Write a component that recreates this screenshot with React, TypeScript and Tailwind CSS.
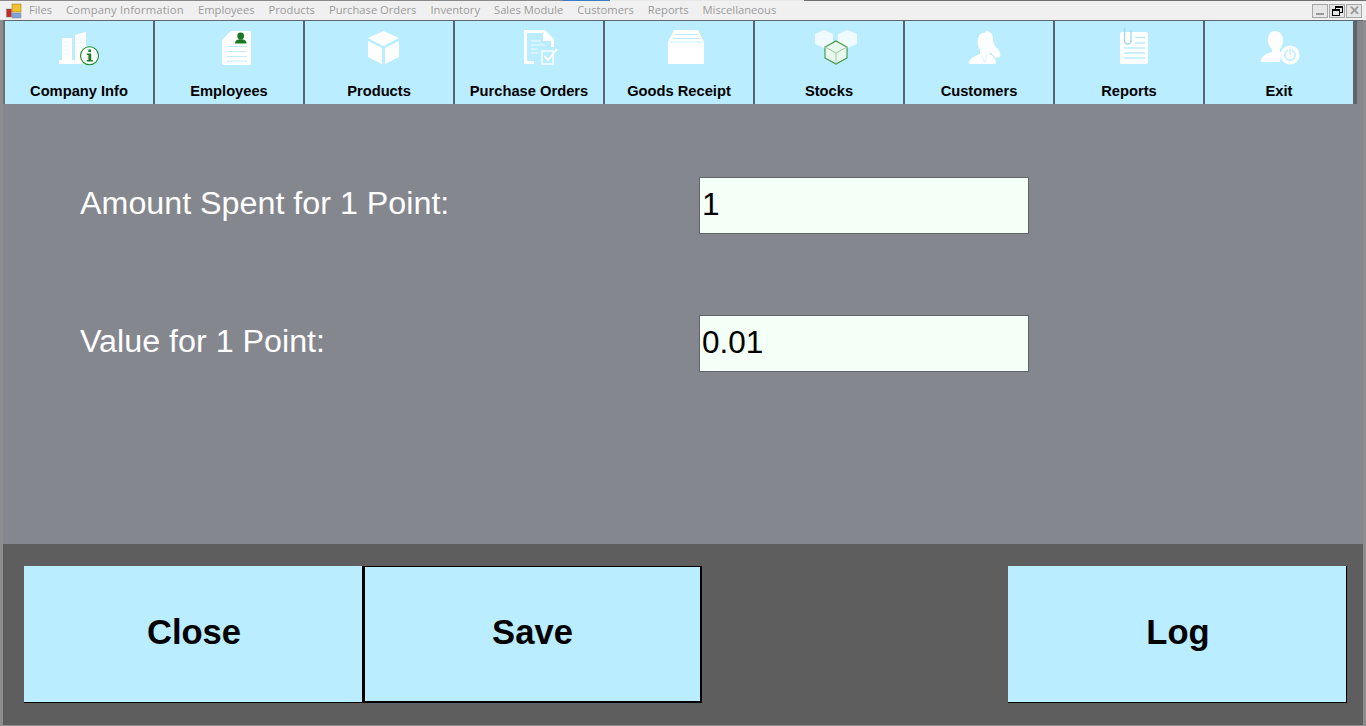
import type { ReactNode } from 'react';

const MENU = ['Files', 'Company Information', 'Employees', 'Products', 'Purchase Orders', 'Inventory', 'Sales Module', 'Customers', 'Reports', 'Miscellaneous'];

const BuildingIcon = () => (
	<svg width="60" height="40" viewBox="0 0 60 40">
		<path d="M13 11H23V33H26V8L37 5V27L34 33V37H10V33H13Z" fill="#fff" />
		<path d="M15.5 15H20.5M15.5 19H20.5M15.5 23H20.5M15.5 27H20.5" stroke="#d5f3fd" strokeWidth="1.2" strokeDasharray="1.5 1" />
		<path d="M28.5 12H35M28.5 16H35M28.5 20H35" stroke="#cfeffb" strokeWidth="1.2" strokeDasharray="1.5 1" />
		<circle cx="40.5" cy="28.7" r="9" fill="#fff" stroke="#1f8a2a" strokeWidth="1.1" />
		<rect x="39.4" y="22.5" width="2.6" height="2.6" fill="#1a7d24" />
		<path d="M37.8 26.5H42.2V33H43.8V34.4H37.8V33H39.4V27.9H37.8Z" fill="#1a7d24" />
	</svg>
);

const EmployeeIcon = () => (
	<svg width="60" height="40" viewBox="0 0 60 40">
		<path d="M32 4H50.5Q52 4 52 5.5V36.5Q52 38 50.5 38H24.5Q23 38 23 36.5V13Z" fill="#fff" />
		<circle cx="41.7" cy="9" r="3.4" fill="#177a22" />
		<path d="M36 16.5C36 13.5 38.5 12.3 41.7 12.3S47.6 13.5 47.6 16.5Z" fill="#177a22" />
		<path d="M28 19.5H48M28 24.5H48M28 29.5H48M28 34H48" stroke="#c4ebf9" strokeWidth="1.1" />
	</svg>
);

const BoxIcon = () => (
	<svg width="60" height="40" viewBox="0 0 60 40">
		<path d="M34.5 4L50 11L34.5 19L19 11Z" fill="#fff" />
		<path d="M19 14L33 21V37L19 30Z" fill="#fff" />
		<path d="M50 14L36 21V37L50 30Z" fill="#fff" />
	</svg>
);

const OrderIcon = () => (
	<svg width="60" height="40" viewBox="0 0 60 40">
		<path d="M25 3H46L55 12V20H52V14H44V6H28V34H35V37H25Z" fill="#fff" />
		<path d="M32 14H42M32 18H46M32 22H39M32 26H39" stroke="#fff" strokeWidth="1.2" opacity="0.8" />
		<path d="M43 24H54V37H43Z" fill="none" stroke="#fff" strokeWidth="1.6" opacity="0.9" />
		<path d="M45.5 29L49 33L58 22" fill="none" stroke="#fff" strokeWidth="1.8" />
	</svg>
);

const ReceiptIcon = () => (
	<svg width="60" height="40" viewBox="0 0 60 40">
		<path d="M25 3H49L55 15V37H19V15Z" fill="#fff" />
		<path d="M26 7.5H48M24 11.5H50" stroke="#b9edff" strokeWidth="1" />
		<path d="M21 15H53" stroke="#b9edff" strokeWidth="0.8" />
	</svg>
);

const StocksIcon = () => (
	<svg width="60" height="40" viewBox="0 0 60 40">
		<path d="M25 3L34 7V17L25 21L16 17V7Z" fill="#f0fbff" />
		<path d="M48.5 3L58 7V17L48.5 21L39 17V7Z" fill="#f0fbff" />
		<path d="M37 14L48 20V31L37 37L26 31V20Z" fill="#e9f8ee" stroke="#3d9440" strokeWidth="1.1" />
		<path d="M26 20L37 26L48 20M37 26V37" fill="none" stroke="#a5c99c" strokeWidth="1" />
	</svg>
);

const CustomerIcon = () => (
	<svg width="60" height="40" viewBox="0 0 60 40">
		<path d="M37 4C42 4 44 8 44 12C44 17 46 19 49 22C51 24 52 27 51 30L47 31L42 26H38Z" fill="#fff" />
		<ellipse cx="35.5" cy="15" rx="7" ry="9.5" fill="#fff" />
		<path d="M20 37C20 32 23 30 31 27V23H40V27C44 29 47 31 47 37Z" fill="#fff" />
		<path d="M33 28L35.5 36L38 28" fill="none" stroke="#d5f3fd" strokeWidth="0.9" />
	</svg>
);

const ReportIcon = () => (
	<svg width="60" height="40" viewBox="0 0 60 40">
		<rect x="21" y="5" width="28" height="32" rx="2" fill="#fff" />
		<path d="M32 3V14C32 18 25.5 18 25.5 14V1" fill="none" stroke="#a9d9e9" strokeWidth="1.4" />
		<path d="M36 10.5H46M36 16H46M25 21H46M25 26H46M25 31H46" stroke="#b9edff" strokeWidth="1.3" />
	</svg>
);

const ExitIcon = () => (
	<svg width="60" height="40" viewBox="0 0 60 40">
		<path d="M26 4C31 4 34 8 34 13C34 18 32 20 31 22V25L34 26C32 28 31 31 31 35H12C12 30 15 27 23 25V22C21 20 19 18 19 13C19 8 21 4 26 4Z" fill="#fff" />
		<circle cx="41" cy="28" r="9.5" fill="#fff" />
		<circle cx="41" cy="28" r="5.2" fill="none" stroke="#b9edff" strokeWidth="1.5" />
		<path d="M41 21V28" stroke="#fff" strokeWidth="4" />
		<path d="M41 22V28" stroke="#b9edff" strokeWidth="1.5" />
	</svg>
);

const TOOLS: { label: string; icon: ReactNode }[] = [
	{ label: 'Company Info', icon: <BuildingIcon /> },
	{ label: 'Employees', icon: <EmployeeIcon /> },
	{ label: 'Products', icon: <BoxIcon /> },
	{ label: 'Purchase Orders', icon: <OrderIcon /> },
	{ label: 'Goods Receipt', icon: <ReceiptIcon /> },
	{ label: 'Stocks', icon: <StocksIcon /> },
	{ label: 'Customers', icon: <CustomerIcon /> },
	{ label: 'Reports', icon: <ReportIcon /> },
	{ label: 'Exit', icon: <ExitIcon /> },
];

const AppIcon = () => (
	<svg width="16" height="16" viewBox="0 0 16 16">
		<rect x="0.5" y="6" width="5" height="8" fill="#c62a22" stroke="#7a7a7a" strokeWidth="0.5" />
		<rect x="6" y="1" width="9" height="8" fill="#f2c230" stroke="#8a6a10" strokeWidth="0.5" />
		<rect x="6" y="10" width="9" height="5" fill="#7fa2dc" stroke="#8a8a8a" strokeWidth="0.5" />
	</svg>
);

const WinButton = ({ children, active }: { children: ReactNode; active?: boolean }) => (
	<div className={`flex h-[14px] w-[16px] items-center justify-center border border-[#a5a5a5] bg-[#e6e6e6] ${active ? 'text-black' : 'text-[#9a9a9a]'}`}>
		{children}
	</div>
);

const Field = ({ label, value }: { label: string; value: string }) => (
	<div className="flex h-[56px] items-start">
		<div className="w-[619px] pt-[4px] text-[32.25px] leading-[44px] text-white">{label}</div>
		<div className="flex h-[57px] w-[330px] items-center border border-[#5f6468] bg-[#f4fff7] pb-[2px] pl-[2px] text-[31.5px] text-black">{value}</div>
	</div>
);

const ActionButton = ({ label, className }: { label: string; className: string }) => (
	<button className={`flex h-[137px] w-[339px] items-center justify-center bg-[#b9edff] pb-[2px] text-[34.6px] font-bold text-black ${className}`}>
		{label}
	</button>
);

const App = () => {
	return (
		<div className="flex h-[726px] w-[1366px] flex-col overflow-hidden bg-[#f0f0f0] font-['Liberation_Sans',sans-serif]">
			<div className="flex h-px">
				<div className="w-[563px] bg-[#8a8a8a]" />
				<div className="w-[47px] bg-[#3a7bc8]" />
				<div className="w-[194px] bg-[#e8e8e8]" />
				<div className="flex-1 bg-[#6e6e6e]" />
			</div>
			<div className="flex h-[19px] items-center bg-[#f0f0f0] pl-[6px] pr-[4px]">
				<AppIcon />
				<div className="ml-[7px] flex gap-[14px] font-['Open_Sans',sans-serif] text-[11.2px] text-[#9b9b9b]">
					{MENU.map((item) => (
						<span key={item} className={item === 'Company Information' ? 'w-[118px] tracking-[0.16px]' : ''}>
							{item}
						</span>
					))}
				</div>
				<div className="ml-auto flex gap-px">
					<WinButton>
						<span className="mt-[7px] h-[2px] w-[8px] bg-[#9a9a9a]" />
					</WinButton>
					<WinButton active>
						<span className="relative h-[10px] w-[11px]">
							<span className="absolute right-0 top-0 h-[7px] w-[8px] border border-t-2 border-black" />
							<span className="absolute bottom-0 left-0 h-[7px] w-[8px] border border-t-2 border-black bg-[#e6e6e6]" />
						</span>
					</WinButton>
					<WinButton>
						<span className="text-[13px] font-bold leading-none">✕</span>
					</WinButton>
				</div>
			</div>
			<div className="flex min-h-0 flex-1 flex-col border-b border-l-[3px] border-r-[3px] border-[#8d8d8d] bg-[#85878f]">
				<div className="flex h-[84px] border-t border-[#60686e]">
					<div className="w-[2px] bg-[#6b7075]" />
					<div className="flex bg-[#b9edff]">
						{TOOLS.map((tool, i) => (
							<div key={tool.label} className={`flex flex-col items-center ${i < 8 ? 'w-[150px] border-r-2 border-[#566570]' : 'w-[148px]'}`}>
								<div className="mt-[5px] flex h-[42px] items-center">{tool.icon}</div>
								<div className="mt-[15px] text-[14.7px] font-bold leading-[17px] text-black">{tool.label}</div>
							</div>
						))}
					</div>
					<div className="w-[4px] bg-[#5f6468]" />
				</div>
				<div className="flex flex-1 flex-col gap-[82px] pl-[77px] pt-[73px]">
					<Field label="Amount Spent for 1 Point:" value="1" />
					<Field label="Value for 1 Point:" value="0.01" />
				</div>
				<div className="flex h-[181px] items-start bg-[#5e5e5e] pl-[21px] pt-[22px]">
					<ActionButton label="Close" className="border-b border-r border-black pl-[2px]" />
					<ActionButton label="Save" className="border-2 border-t border-black" />
					<ActionButton label="Log" className="ml-[306px] border-b border-r border-black pl-[2px]" />
				</div>
			</div>
		</div>
	);
};

export default App;
